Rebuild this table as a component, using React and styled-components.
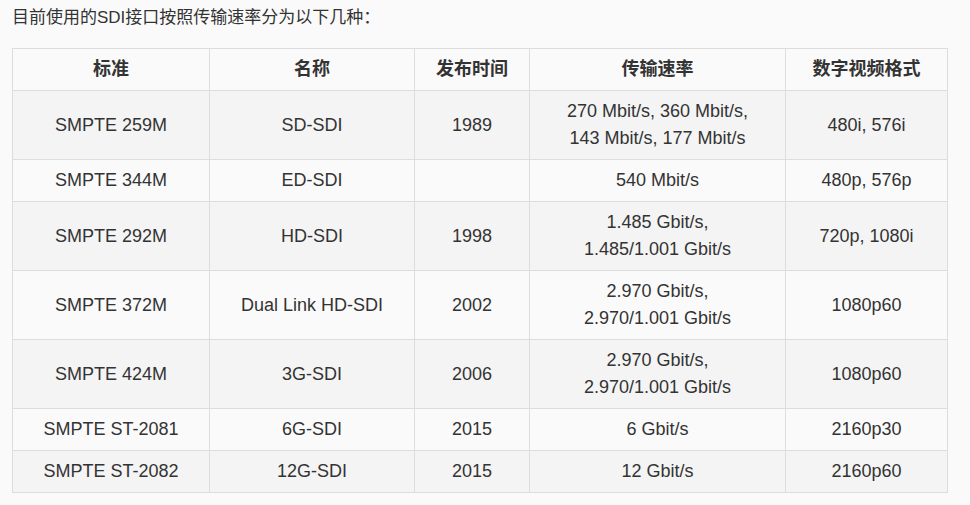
import React from 'react';
import styled, { createGlobalStyle } from 'styled-components';

const GlobalStyle = createGlobalStyle`
  html, body {
    margin: 0;
    padding: 0;
    background: #fafafa;
  }
  body {
    font-family: "Liberation Sans", Arial, "Noto Sans CJK SC", sans-serif;
    color: #333;
    font-size: 18px;
  }
`;

const Page = styled.div`
  padding: 5px 12px 0 12px;
`;

const Intro = styled.p`
  margin: 0 0 17px 0;
  font-size: 17px;
  line-height: 26px;
`;

const Table = styled.table`
  border-collapse: collapse;
  table-layout: fixed;
  width: 935px;
`;

const Row = styled.tr`
  background: ${p => (p.$shaded ? '#f4f4f4' : '#fafafa')};
`;

const HeadCell = styled.th`
  border: 1px solid #ddd;
  padding: 7px 8px;
  line-height: 27px;
  font-weight: bold;
  text-align: center;
`;

const Cell = styled.td`
  border: 1px solid #ddd;
  padding: 7px 8px;
  line-height: 27px;
  text-align: center;
`;

const columns = [
  { title: '标准', width: 197 },
  { title: '名称', width: 205 },
  { title: '发布时间', width: 115 },
  { title: '传输速率', width: 256 },
  { title: '数字视频格式', width: 162 },
];

const rows = [
  ['SMPTE 259M', 'SD-SDI', '1989', ['270 Mbit/s, 360 Mbit/s,', '143 Mbit/s, 177 Mbit/s'], '480i, 576i'],
  ['SMPTE 344M', 'ED-SDI', '', ['540 Mbit/s'], '480p, 576p'],
  ['SMPTE 292M', 'HD-SDI', '1998', ['1.485 Gbit/s,', '1.485/1.001 Gbit/s'], '720p, 1080i'],
  ['SMPTE 372M', 'Dual Link HD-SDI', '2002', ['2.970 Gbit/s,', '2.970/1.001 Gbit/s'], '1080p60'],
  ['SMPTE 424M', '3G-SDI', '2006', ['2.970 Gbit/s,', '2.970/1.001 Gbit/s'], '1080p60'],
  ['SMPTE ST-2081', '6G-SDI', '2015', ['6 Gbit/s'], '2160p30'],
  ['SMPTE ST-2082', '12G-SDI', '2015', ['12 Gbit/s'], '2160p60'],
];

export default function App() {
  return (
    <Page>
      <GlobalStyle />
      <Intro>目前使用的SDI接口按照传输速率分为以下几种：</Intro>
      <Table>
        <colgroup>
          {columns.map(c => (
            <col key={c.title} style={{ width: c.width }} />
          ))}
        </colgroup>
        <thead>
          <Row>
            {columns.map(c => (
              <HeadCell key={c.title}>{c.title}</HeadCell>
            ))}
          </Row>
        </thead>
        <tbody>
          {rows.map((r, i) => (
            <Row key={r[0]} $shaded={i % 2 === 0}>
              <Cell>{r[0]}</Cell>
              <Cell>{r[1]}</Cell>
              <Cell>{r[2]}</Cell>
              <Cell>
                {r[3].map((line, j) => (
                  <React.Fragment key={j}>
                    {j > 0 && <br />}
                    {line}
                  </React.Fragment>
                ))}
              </Cell>
              <Cell>{r[4]}</Cell>
            </Row>
          ))}
        </tbody>
      </Table>
    </Page>
  );
}
